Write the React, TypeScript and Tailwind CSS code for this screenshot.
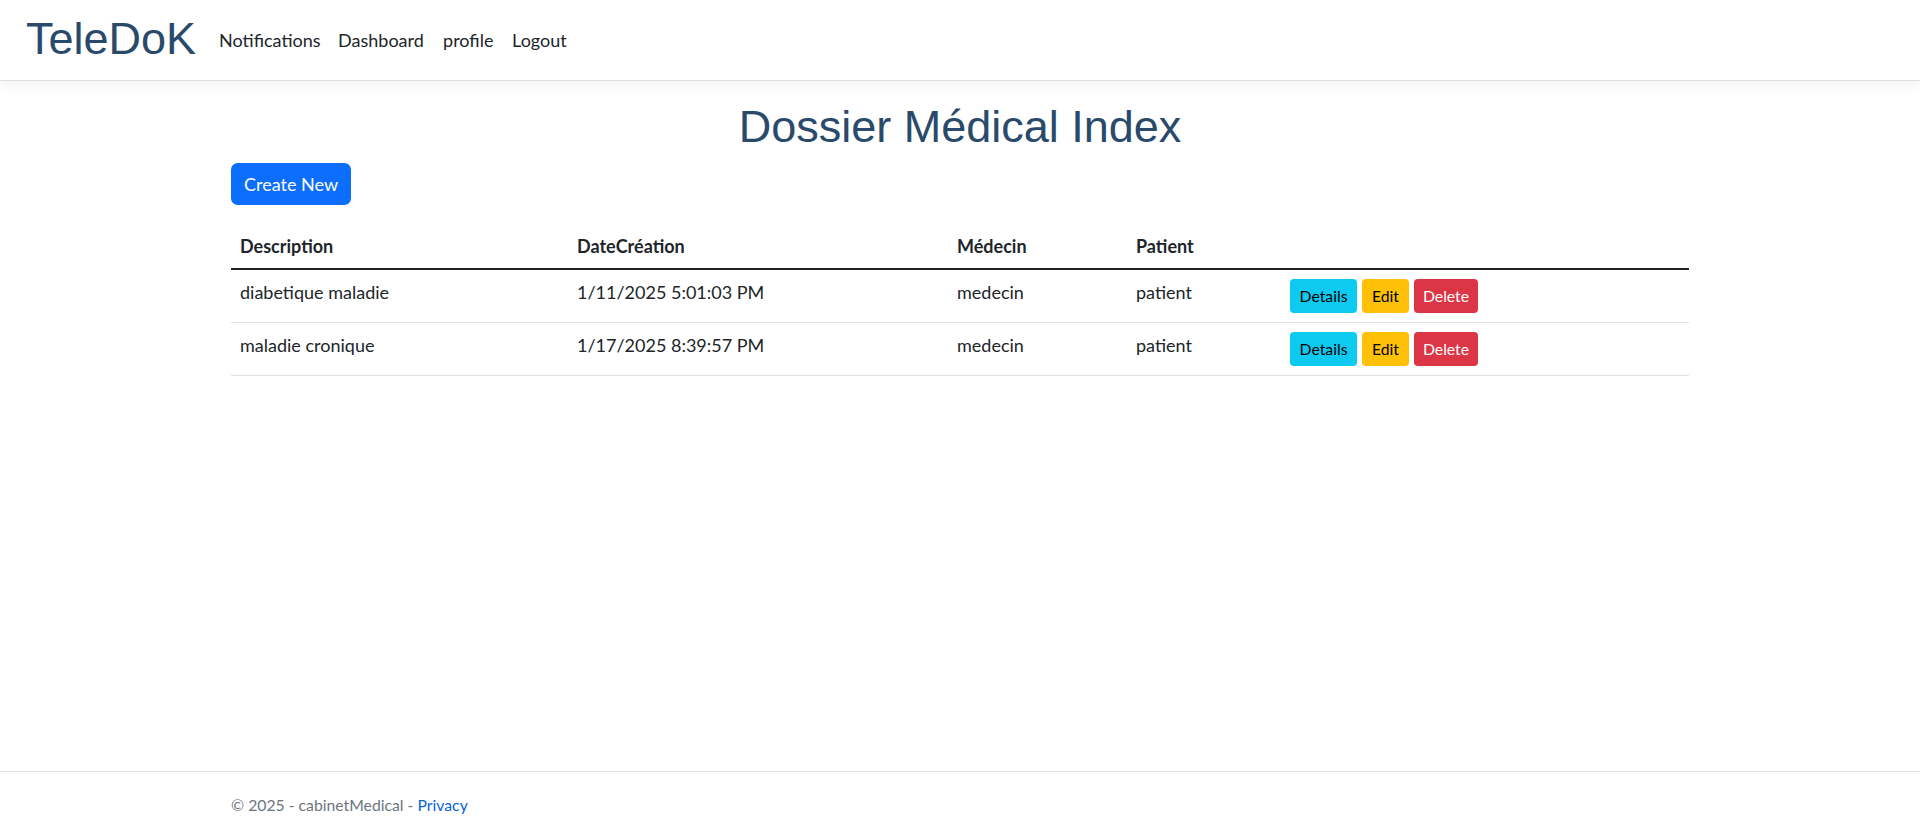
import React from "react";

const body = { fontFamily: "Lato, 'Noto Sans', sans-serif" };

const rows = [
  { d: "diabetique maladie", date: "1/11/2025 5:01:03 PM", m: "medecin", p: "patient" },
  { d: "maladie cronique", date: "1/17/2025 8:39:57 PM", m: "medecin", p: "patient" },
];

export default function App() {
  return (
    <div className="min-h-screen flex flex-col bg-white text-[#212529]" style={body}>
      <header className="h-[81px] shrink-0 bg-white border-b border-[#dee2e6] shadow-[0_4.5px_13.5px_rgba(0,0,0,0.05)] flex items-center pl-[26px]">
        <a className="text-[45px] leading-none text-[#294a6b] mr-[23px] -mt-[4px]" style={{ fontFamily: "'Liberation Sans', Arial, sans-serif" }}>
          TeleDoK
        </a>
        <nav className="flex items-center text-[18px] text-[#212529] mt-[1px]">
          <a className="w-[119px]">Notifications</a>
          <a className="w-[105px]">Dashboard</a>
          <a className="w-[69px]">profile</a>
          <a>Logout</a>
        </nav>
      </header>

      <main className="w-[1458px] mx-auto mt-[19px] flex flex-col">
        <h1
          className="text-center text-[45px] leading-[54px] text-[#294a6b] mb-[9px]"
          style={{ fontFamily: "'Liberation Sans', Arial, sans-serif" }}
        >
          Dossier Médical Index
        </h1>
        <div className="mb-[19px]">
          <a className="inline-flex items-center h-[42px] px-[13px] rounded-[6.5px] bg-[#0d6efd] text-white text-[18px]">
            Create New
          </a>
        </div>
        <table className="w-full border-collapse text-[18px]">
          <thead>
            <tr className="border-b-2 border-[#212529] text-left">
              <th className="w-[337px] px-[9px] h-[45px] font-bold">Description</th>
              <th className="w-[380px] px-[9px] font-bold">DateCréation</th>
              <th className="w-[179px] px-[9px] font-bold">Médecin</th>
              <th className="w-[154px] px-[9px] font-bold">Patient</th>
              <th className="px-[9px]"></th>
            </tr>
          </thead>
          <tbody>
            {rows.map((r, i) => (
              <tr key={i} className="border-b border-[#dee2e6]">
                <td className="px-[9px] h-[53px] align-top pt-[9px]">{r.d}</td>
                <td className="px-[9px] align-top pt-[9px]">{r.date}</td>
                <td className="px-[9px] align-top pt-[9px]">{r.m}</td>
                <td className="px-[9px] align-top pt-[9px]">{r.p}</td>
                <td className="px-[9px] py-[9px] align-top">
                  <div className="flex gap-[5px] text-[15.75px]">
                    <a className="h-[34px] w-[67px] flex items-center justify-center rounded-[4px] bg-[#0dcaf0] text-black">Details</a>
                    <a className="h-[34px] w-[47px] flex items-center justify-center rounded-[4px] bg-[#ffc107] text-black">Edit</a>
                    <a className="h-[34px] w-[64px] flex items-center justify-center rounded-[4px] bg-[#dc3545] text-white">Delete</a>
                  </div>
                </td>
              </tr>
            ))}
          </tbody>
        </table>
      </main>

      <footer className="mt-auto border-t border-[#dee2e6] h-[68.5px] flex items-center">
        <div className="w-[1458px] mx-auto text-[15.75px] text-[#6c757d]">
          © 2025 - cabinetMedical - <a className="text-[#0366d6]">Privacy</a>
        </div>
      </footer>
    </div>
  );
}
